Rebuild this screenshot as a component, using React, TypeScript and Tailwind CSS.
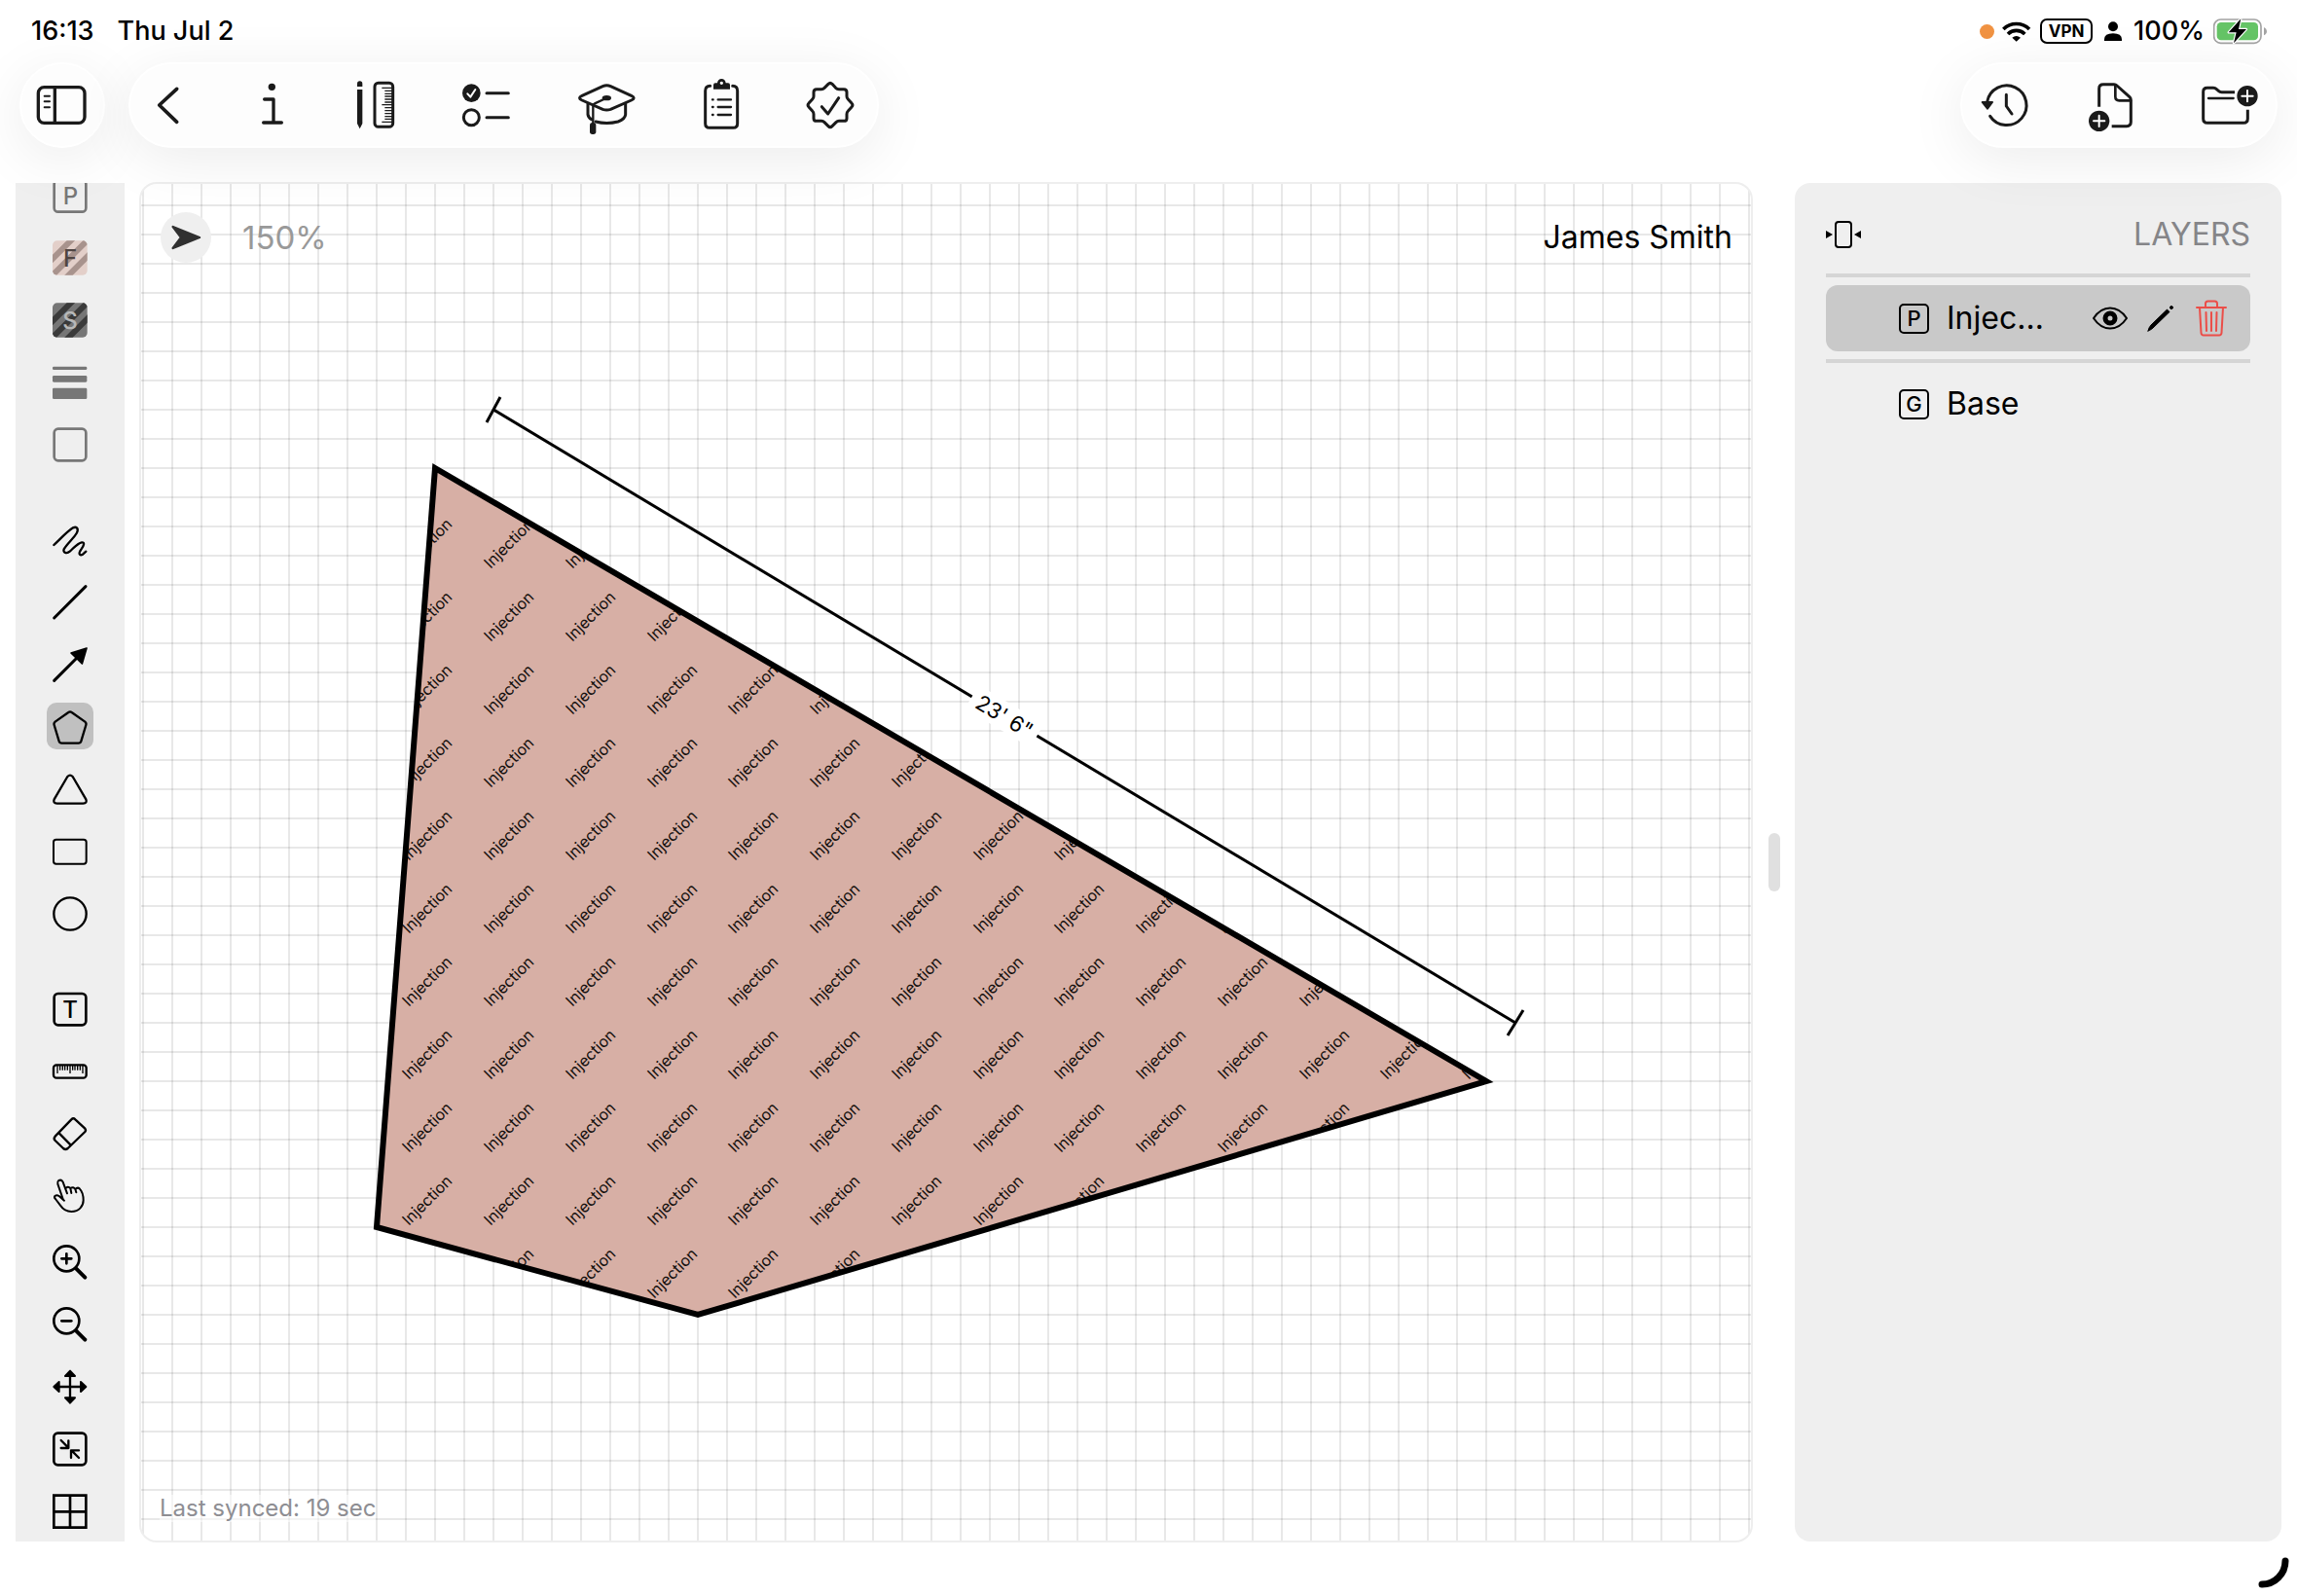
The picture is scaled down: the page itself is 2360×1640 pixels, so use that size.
import type { ReactNode } from "react";

type Point = [number, number];

const INK = "#1a1a1a";

/* ---------- shared icon wrapper ---------- */

function Icon({
  box,
  className,
  color = "#000",
  width = 8,
  children,
}: {
  box: string;
  className: string;
  color?: string;
  width?: number;
  children: ReactNode;
}) {
  return (
    <svg
      viewBox={box}
      className={`${className} shrink-0 overflow-visible`}
      fill="none"
      stroke={color}
      strokeWidth={width}
      strokeLinecap="round"
      strokeLinejoin="round"
      aria-hidden="true"
    >
      {children}
    </svg>
  );
}

/* ---------- status bar ---------- */

function StatusBar() {
  return (
    <div className="flex h-16 items-center justify-between pr-[30px] pl-8 text-[27px] leading-8 font-medium text-black">
      <div className="flex gap-6">
        <span>16:13</span>
        <span>Thu Jul 2</span>
      </div>
      <div className="flex items-center">
        <span className="size-[15px] rounded-full bg-[#f09242]" />
        <svg viewBox="226 64 90 63" className="ml-2 h-[21px] w-[30px]" fill="none" stroke="#000" strokeWidth="11" aria-hidden="true">
          <path d="M230 88 A57 57 0 0 1 310 88" />
          <path d="M244 103 A37 37 0 0 1 296 103" />
          <path d="M270 126 L257 114 Q270 104 283 114 Z" fill="#000" stroke="none" />
        </svg>
        <span className="ml-[9px] flex h-[26px] w-[54px] items-center justify-center rounded-[7px] border-2 border-black text-[17px] leading-5 font-bold">
          VPN
        </span>
        <svg viewBox="543 66 54 60" className="ml-3 h-5 w-[18px]" aria-hidden="true">
          <circle cx="570" cy="82" r="15" />
          <path d="M543 126 V121 Q543 103 570 103 Q597 103 597 121 V126 Z" />
        </svg>
        <span className="ml-3">100%</span>
        <svg viewBox="885 54 168 84" className="ml-[9px] h-7 w-14" aria-hidden="true">
          <rect x="887" y="60" width="145" height="73" rx="21" fill="none" stroke="#a3a3a3" strokeWidth="5" />
          <rect x="896" y="69" width="127" height="55" rx="13" fill="#65c466" />
          <path d="M1041 84 Q1050 88 1050 96 Q1050 105 1041 109 Z" fill="#a3a3a3" />
          <path d="M970 58 L932 100 H956 L948 133 L987 90 H963 Z" fill="#000" stroke="#fff" strokeWidth="7" paintOrder="stroke" strokeLinejoin="round" />
        </svg>
      </div>
    </div>
  );
}

/* ---------- floating header bars ---------- */

const PILL =
  "flex h-[88px] items-center rounded-full border-2 border-white bg-[#fdfdfd] shadow-[0_12px_60px_rgba(0,0,0,0.08)]";

function Header() {
  const badge =
    "M1233 109 Q1239 103 1245 109 L1256 121 Q1260 125 1266 125 H1281 Q1290 125 1290 134 V147 Q1290 152 1294 156 L1305 168 Q1311 174 1305 180 L1294 192 Q1290 196 1290 202 V215 Q1290 223 1281 223 H1266 Q1261 223 1257 227 L1245 239 Q1239 245 1233 239 L1221 227 Q1217 223 1212 223 H1197 Q1188 223 1188 215 V202 Q1188 196 1184 192 L1173 180 Q1167 174 1173 168 L1184 156 Q1188 152 1188 147 V134 Q1188 125 1197 125 H1212 Q1217 125 1221 121 Z";
  const ticks = [271, 280, 289, 297, 306, 315, 323, 332, 341, 350, 359, 367, 376];
  return (
    <nav className="flex items-center px-5" aria-label="Main">
      <button type="button" aria-label="Sidebar" className={`${PILL} w-[88px] justify-center`}>
        <Icon box="114 258 156 132" className="h-11 w-[52px]" color={INK} width={10}>
          <rect x="118" y="269" width="143" height="110" rx="18" />
          <path d="M169 270 V378" />
          <path d="M137 296 H153 M137 313 H153 M137 331 H153" strokeWidth="6" />
        </Icon>
      </button>

      <div className={`${PILL} ml-6 gap-[70px] pr-6 pl-[21px]`}>
        <button type="button" aria-label="Back">
          <Icon box="465 258 108 132" className="h-11 w-9" color={INK} width={11}>
            <path d="M545 274 L491 324 L545 376" />
          </Icon>
        </button>
        <button type="button" aria-label="Info">
          <Icon box="783 258 108 132" className="h-11 w-9" color={INK} width={10}>
            <circle cx="838" cy="268" r="11" fill={INK} stroke="none" />
            <path d="M815 306 H843 V378 M812 378 H868" />
          </Icon>
        </button>
        <button type="button" aria-label="Drawing tools">
          <Icon box="1101 246 114 156" className="h-[52px] w-[38px]" color={INK} width={9}>
            <path d="M1101 267 V258 Q1101 250 1109 250 Q1117 250 1117 258 V267 Z M1101 276 H1117 V381 L1109 397 L1101 381 Z" fill={INK} stroke="none" />
            <rect x="1155" y="256" width="56" height="135" rx="11" />
            <path
              d={ticks.map((y, i) => `M${i % 6 === 0 ? 1177 : 1186} ${y} H1210`).join(" ")}
              strokeWidth="4"
              strokeLinecap="butt"
            />
          </Icon>
        </button>
        <button type="button" aria-label="Checklist">
          <Icon box="105 96 147 156" className="h-[52px] w-[49px]" color={INK} width={9}>
            <circle cx="133" cy="137" r="28" fill={INK} stroke="none" />
            <path d="M121 139 L130 149 L145 126" stroke="#fff" strokeWidth="6" />
            <circle cx="133" cy="212" r="24" />
            <path d="M180 137 H247 M180 212 H247" />
          </Icon>
        </button>
        <button type="button" aria-label="Training">
          <Icon box="462 87 177 174" className="h-[58px] w-[59px]" color={INK} width={9}>
            <path d="M538 116 L474 145 Q459 152 474 159 L538 187 Q550 191 562 187 L626 159 Q641 152 626 145 L562 116 Q550 111 538 116 Z" />
            <ellipse cx="550" cy="152" rx="14" ry="8" fill={INK} stroke="none" />
            <path d="M548 153 L513 169 Q508 171 508 178 V232" strokeWidth="7" />
            <rect x="498" y="228" width="19" height="36" rx="8" fill={INK} stroke="none" />
            <path d="M492 170 V203 Q494 213 503 218 M516 225 Q550 234 585 225 Q607 217 608 203 V169" />
          </Icon>
        </button>
        <button type="button" aria-label="Notes">
          <Icon box="849 96 108 156" className="h-[52px] w-9" color={INK} width={9}>
            <path d="M869 115 Q854 115 854 130 V231 Q854 244 867 244 H940 Q953 244 953 231 V130 Q953 115 938 115" />
            <path d="M879 125 V112 Q879 106 885 106 H924 Q930 106 930 112 V125 Z" fill={INK} stroke="none" />
            <circle cx="904" cy="106" r="9" fill="#fff" strokeWidth="8" />
            <path d="M893 157 H933 M893 180 H933 M893 204 H933 M876 157 H878 M876 180 H878 M876 204 H878" strokeWidth="7" />
          </Icon>
        </button>
        <button type="button" aria-label="Approve">
          <Icon box="1167 96 144 156" className="h-[52px] w-12" color={INK} width={9}>
            <path d={badge} />
            <path d="M1213 179 L1232 201 L1265 152" />
          </Icon>
        </button>
      </div>

      <div className={`${PILL} ml-auto gap-[63px] pr-[18px] pl-[19px]`}>
        <button type="button" aria-label="History">
          <Icon box="165 246 144 156" className="h-[52px] w-12" color={INK} width={9}>
            <path d="M185 314 A61 61 0 1 1 194 358" />
            <path d="M170 315 H201 L186 335 Z" fill={INK} strokeWidth="6" />
            <path d="M244 292 V327 L261 351" />
          </Icon>
        </button>
        <button type="button" aria-label="New file">
          <Icon box="498 246 162 156" className="h-[52px] w-[54px]" color={INK} width={9}>
            <path d="M530 329 V273 Q530 260 543 260 H576 Q581 260 585 264 L624 299 Q628 303 628 309 V376 Q628 389 615 389 H569" strokeLinecap="butt" />
            <path d="M580 262 V298 Q580 310 592 310 H627" strokeWidth="8" />
            <circle cx="530" cy="373" r="32" fill={INK} stroke="none" />
            <path d="M513 373 H547 M530 356 V390" stroke="#fff" strokeWidth="6" />
          </Icon>
        </button>
        <button type="button" aria-label="New folder">
          <Icon box="849 246 171 156" className="h-[52px] w-[57px]" color={INK} width={9}>
            <path d="M988 338 V366 Q988 379 975 379 H864 Q851 379 851 366 V283 Q851 271 863 271 H882 Q888 271 892 275 L898 280 Q902 284 908 284 H948" strokeLinecap="butt" />
            <path d="M867 303 H944" strokeWidth="7" />
            <circle cx="987" cy="296" r="32" fill={INK} stroke="none" />
            <path d="M970 296 H1004 M987 279 V313" stroke="#fff" strokeWidth="6" />
          </Icon>
        </button>
      </div>
    </nav>
  );
}

/* ---------- left tool column ---------- */

const DIM = "#777";

const LETTER = {
  fontFamily: "Inter, sans-serif",
  fontSize: 72,
  fontWeight: 500,
  textAnchor: "middle" as const,
  stroke: "none",
};

function Stripes({ id, y, base, band, letter, ink }: { id: string; y: number; base: string; band: string; letter: string; ink: string }) {
  const sums = [218, 268, 318].map((d) => d + y);
  return (
    <>
      <clipPath id={id}>
        <rect x="162" y={y} width="107" height="106" rx="14" />
      </clipPath>
      <rect x="162" y={y} width="107" height="106" rx="14" fill={base} stroke="none" />
      <path
        clipPath={`url(#${id})`}
        d={sums.map((s) => `M150 ${s - 150} L280 ${s - 280}`).join(" ")}
        stroke={band}
        strokeWidth="18"
      />
      <text {...LETTER} x="216" y={y + 80} fill={ink}>
        {letter}
      </text>
    </>
  );
}

type Tool = { name: string; y: number; art: ReactNode; color?: string; selected?: boolean; tall?: boolean };

const TOOL_GROUPS: Tool[][] = [
  [
    {
      name: "Pen color",
      y: 30,
      color: DIM,
      art: (
        <>
          <rect x="167" y="46" width="98" height="97" rx="12" />
          <text {...LETTER} x="217" y="119" fill={DIM}>
            P
          </text>
        </>
      ),
    },
    { name: "Fill", y: 222, art: <Stripes id="fill" y={232} base="#e3cfc9" band="#a8938d" letter="F" ink="#4f4542" /> },
    { name: "Stroke", y: 414, art: <Stripes id="stroke" y={424} base="#767676" band="#3a3a3a" letter="S" ink="#b8b8b8" /> },
    {
      name: "Line weight",
      y: 606,
      art: (
        <g fill={DIM} stroke="none">
          <rect x="162" y="620" width="106" height="10" rx="4" />
          <rect x="162" y="648" width="106" height="20" rx="4" />
          <rect x="162" y="686" width="106" height="34" rx="4" />
        </g>
      ),
    },
    { name: "Border", y: 798, color: DIM, art: <rect x="167" y="812" width="98" height="98" rx="12" /> },
  ],
  [
    {
      name: "Freehand",
      y: 12,
      art: <path d="M166 90 C185 72 210 46 225 37 C238 31 243 42 236 54 C228 68 205 88 197 103 C193 114 206 118 215 110 C228 98 240 84 252 82 C262 81 259 92 250 104 C240 118 246 124 255 119 L265 110" strokeWidth="7" />,
    },
    { name: "Line", y: 204, art: <path d="M167 315 L264 218" strokeWidth="9" /> },
    {
      name: "Arrow",
      y: 396,
      art: (
        <>
          <path d="M167 508 L240 435" strokeWidth="9" />
          <path d="M267 408 L219 423 L253 456 Z" fill="#000" strokeWidth="5" />
        </>
      ),
    },
    {
      name: "Polygon",
      y: 588,
      selected: true,
      art: <path d="M211 606 Q216 602 221 606 L262 635 Q267 639 265 645 L250 695 Q248 701 242 701 H190 Q184 701 182 695 L167 645 Q165 639 170 635 Z" strokeWidth="7" />,
    },
    { name: "Triangle", y: 780, art: <path d="M208 804 Q216 796 224 804 L265 874 Q270 886 256 887 H176 Q162 886 167 874 Z" strokeWidth="7" /> },
    { name: "Rectangle", y: 972, art: <rect x="165" y="998" width="101" height="75" rx="8" strokeWidth="6" /> },
    { name: "Circle", y: 1164, art: <circle cx="216" cy="1227" r="50" strokeWidth="7" /> },
  ],
  [
    {
      name: "Text",
      y: 138,
      art: (
        <>
          <rect x="167" y="153" width="98" height="97" rx="12" />
          <text {...LETTER} x="216" y="228" fill="#000">
            T
          </text>
        </>
      ),
    },
    {
      name: "Ruler",
      y: 330,
      art: (
        <>
          <rect x="165" y="373" width="101" height="40" rx="9" strokeWidth="7" />
          <path
            d={[177, 185, 193, 200, 208, 216, 224, 231, 239, 247, 255].map((x, i) => `M${x} 374 V${i % 5 === 0 ? 399 : 389}`).join(" ")}
            strokeWidth="4"
            strokeLinecap="butt"
          />
        </>
      ),
    },
    {
      name: "Eraser",
      y: 522,
      art: <path d="M220 541 Q226 535 232 541 L262 569 Q266 574 262 579 L209 630 Q202 636 195 630 L170 606 Q164 600 170 593 Z M182 583 L218 620" strokeWidth="7" />,
    },
    {
      name: "Hand",
      y: 720,
      tall: true,
      art: (
        <path
          d="M198 791 L182 777 Q175 772 169 777 Q166 781 171 786 L186 806 Q199 825 220 825 C244 825 257 808 257 790 C257 773 251 760 245 754 Q239 749 232 756 L235 766 M232 756 Q226 747 217 753 L220 768 M217 753 Q209 745 202 754 M207 769 L194 734 Q190 725 181 729 Q176 733 178 740 L195 789"
          strokeWidth="6"
        />
      ),
    },
    {
      name: "Zoom in",
      y: 48,
      art: (
        <>
          <circle cx="205" cy="100" r="39" />
          <path d="M235 131 L262 158" strokeWidth="12" />
          <path d="M190 100 H220 M205 85 V115" />
        </>
      ),
    },
    {
      name: "Zoom out",
      y: 240,
      art: (
        <>
          <circle cx="205" cy="292" r="39" />
          <path d="M235 323 L262 350" strokeWidth="12" />
          <path d="M190 292 H220" />
        </>
      ),
    },
    {
      name: "Move",
      y: 432,
      art: (
        <>
          <path d="M176 495 H256 M216 455 V535" strokeWidth="7" />
          <path
            d="M216 446 L201 462 H231 Z M216 545 L201 529 H231 Z M166 495 L182 480 V510 Z M265 495 L249 480 V510 Z"
            fill="#000"
            strokeWidth="6"
          />
        </>
      ),
    },
    {
      name: "Fit to screen",
      y: 624,
      art: (
        <>
          <rect x="166" y="638" width="99" height="98" rx="12" />
          <path d="M188 660 L210 682 M211 661 V684 H188 M243 714 L221 692 M219 714 V691 H243" strokeWidth="7" />
        </>
      ),
    },
    {
      name: "Grid",
      y: 816,
      art: <path d="M166 830 H265 V929 H166 Z M216 830 V929 M166 880 H265" strokeLinejoin="miter" />,
    },
  ],
];

function ToolColumn() {
  return (
    <aside className="my-px flex w-28 shrink-0 flex-col justify-end gap-[34px] overflow-hidden bg-[#efefef]" aria-label="Tools">
      {TOOL_GROUPS.map((group) => (
        <div key={group[0].name} className="flex shrink-0 flex-col items-center">
          {group.map((tool) => (
            <div key={tool.name} className={tool.tall ? "flex h-[68px] items-center" : "flex h-16 items-center"}>
              <button
                type="button"
                aria-label={tool.name}
                aria-pressed={tool.selected ?? false}
                className={`flex size-12 items-center justify-center rounded-[10px] ${tool.selected ? "bg-[#c0c0c0]" : ""}`}
              >
                <Icon box={`156 ${tool.y} 120 120`} className="size-10" color={tool.color}>
                  {tool.art}
                </Icon>
              </button>
            </div>
          ))}
        </div>
      ))}
    </aside>
  );
}

/* ---------- drawing ---------- */

const SHAPE: Point[] = [
  [302, 292],
  [1382, 922],
  [572, 1162],
  [242, 1072],
];

function inside([x, y]: Point) {
  let hit = false;
  SHAPE.forEach(([x1, y1], i) => {
    const [x2, y2] = SHAPE[(i + 1) % SHAPE.length];
    if (y1 > y !== y2 > y && x < ((x2 - x1) * (y - y1)) / (y2 - y1) + x1) hit = !hit;
  });
  return hit;
}

const LABELS: Point[] = [];
for (let row = 0; row < 11; row++) {
  for (let col = -1; col < 13; col++) {
    const x = 359 + Math.round((col * 335) / 4);
    const y = 396 + row * 75;
    if ([0, 10, 20, 30, 40, 46].some((d) => inside([x + d, y - d]) || inside([x + d - 6, y - d - 6]))) LABELS.push([x, y]);
  }
}

function Drawing() {
  const points = SHAPE.map((p) => p.join(",")).join(" ");
  return (
    <svg className="absolute inset-0 size-full" fontFamily="Inter, sans-serif" role="img" aria-label="Injection area, 23 feet 6 inches">
      <clipPath id="area">
        <polygon points={points} />
      </clipPath>
      <polygon points={points} fill="#d7afa5" />
      <g clipPath="url(#area)" fontSize="16" fill="#140f0e">
        {LABELS.map(([x, y]) => (
          <text key={`${x}-${y}`} transform={`translate(${x} ${y}) rotate(-45)`}>
            Injection
          </text>
        ))}
      </g>
      <polygon points={points} fill="none" stroke="#000" strokeWidth="6" />
      <g stroke="#000" strokeWidth="3">
        <path d="M362 232 L1412 862" />
        <path d="M369 219 L355 245 M1420 849 L1404 875" />
      </g>
      <g transform="translate(887 547) rotate(31)">
        <rect x="-39" y="-14" width="78" height="28" fill="#fff" />
        <text fontSize="22" y="8" textAnchor="middle" fill="#000">
          {"23' 6\""}
        </text>
      </g>
    </svg>
  );
}

function Canvas() {
  return (
    <main className="relative ml-[15px] flex min-w-0 flex-1 flex-col justify-between overflow-hidden rounded-[18px] border-2 border-[#eeeeee] bg-white bg-[linear-gradient(to_right,rgba(0,0,0,0.09)_2px,transparent_2px),linear-gradient(to_bottom,rgba(0,0,0,0.09)_2px,transparent_2px)] bg-[size:30px_30px] bg-[position:1px_21px]">
      <Drawing />
      <div className="relative flex items-center justify-between pt-[29px] pr-[19px] pl-5 leading-10">
        <div className="flex items-center gap-8">
          <button type="button" aria-label="Select" className="flex size-[52px] items-center justify-center rounded-full bg-[#efefef]">
            <svg viewBox="524 180 96 90" className="h-[30px] w-8" aria-hidden="true">
              <path d="M532 192 L614 225 L532 258 L557 225 Z" fill="#303030" stroke="#303030" strokeWidth="7" strokeLinejoin="round" />
            </svg>
          </button>
          <span className="text-[33px] text-[#999999]">150%</span>
        </div>
        <span className="text-[32px] text-black">James Smith</span>
      </div>
      <p className="relative mb-[19px] ml-[19px] self-start bg-white/50 text-2xl leading-7 text-[#8e8e93]">Last synced: 19 sec</p>
    </main>
  );
}

/* ---------- layers ---------- */

function LetterBox({ letter }: { letter: string }) {
  return (
    <span className="flex size-[31px] shrink-0 items-center justify-center rounded-[5px] border-2 border-black text-[22px] leading-6 font-medium">
      {letter}
    </span>
  );
}

function Layers() {
  return (
    <aside className="my-px flex w-[500px] shrink-0 flex-col rounded-2xl bg-[#efefef] px-8 text-[32px] leading-10 text-black" aria-label="Layers">
      <div className="mt-[33px] flex h-10 items-center justify-between">
        <button type="button" aria-label="Collapse panel">
          <Icon box="0 0 36 30" className="h-[30px] w-9" width={2}>
            <rect x="10" y="2" width="16" height="26" rx="3" />
            <path d="M0 11 L7 15 L0 19 Z M36 11 L29 15 L36 19 Z" fill="#000" stroke="none" />
          </Icon>
        </button>
        <h2 className="text-[#858588]">LAYERS</h2>
      </div>
      <ul className="mt-5 flex flex-col gap-2">
        <li className="h-1 bg-[#d5d5d5]" role="separator" />
        <li className="flex h-[68px] items-center rounded-xl bg-[#c9c9c9] pr-6 pl-[75px]">
          <LetterBox letter="P" />
          <span className="ml-[18px] flex-1">Injec…</span>
          <button type="button" aria-label="Visibility">
            <Icon box="0 0 36 24" className="h-6 w-9" width={2}>
              <path d="M1 12 Q8 1.500 18 1.500 Q28 1.500 35 12 Q28 22.500 18 22.500 Q8 22.500 1 12 Z" />
              <circle cx="18" cy="12" r="5" strokeWidth="5" />
            </Icon>
          </button>
          <button type="button" aria-label="Edit" className="ml-5">
            <Icon box="0 0 28 28" className="size-7" width={1}>
              <path d="M1 27 Q2 23 4 21 L20.500 5 L23 7.500 L6 24 Q4 26 1 27 Z" fill="#000" />
              <circle cx="25" cy="3" r="1.500" fill="#000" />
            </Icon>
          </button>
          <button type="button" aria-label="Delete" className="ml-[22px]">
            <Icon box="0 0 32 38" className="h-[38px] w-8" color="#eb4e48" width={2}>
              <path d="M1 8 H31 M10 8 V4 Q10 1.500 12.500 1.500 H19.500 Q22 1.500 22 4 V8 M4 8 L5.500 34 Q5.700 36.500 8 36.500 H24 Q26.300 36.500 26.500 34 L28 8 M10.500 13 L11 32 M16 13 V32 M21.500 13 L21 32" />
            </Icon>
          </button>
        </li>
        <li className="h-1 bg-[#d5d5d5]" role="separator" />
        <li className="flex h-[68px] items-center pr-6 pl-[75px]">
          <LetterBox letter="G" />
          <span className="ml-[18px]">Base</span>
        </li>
      </ul>
    </aside>
  );
}

export default function App() {
  return (
    <div className="relative flex h-screen flex-col overflow-hidden bg-white font-[Inter,sans-serif]">
      <header className="relative z-10 shrink-0">
        <StatusBar />
        <Header />
      </header>
      <div className="mt-[35px] mb-[55px] flex min-h-0 flex-1 px-4">
        <ToolColumn />
        <Canvas />
        <div className="flex w-[43px] shrink-0 items-center justify-center">
          <button type="button" aria-label="Resize panel" className="h-[60px] w-3 rounded-full bg-[#e0e0e0]" />
        </div>
        <Layers />
      </div>
      <svg viewBox="0 0 32 32" className="absolute right-2 bottom-2 size-8" fill="none" stroke="#000" strokeWidth="7" strokeLinecap="round" aria-hidden="true">
        <path d="M4 28 A24 24 0 0 0 28 4" />
      </svg>
    </div>
  );
}
